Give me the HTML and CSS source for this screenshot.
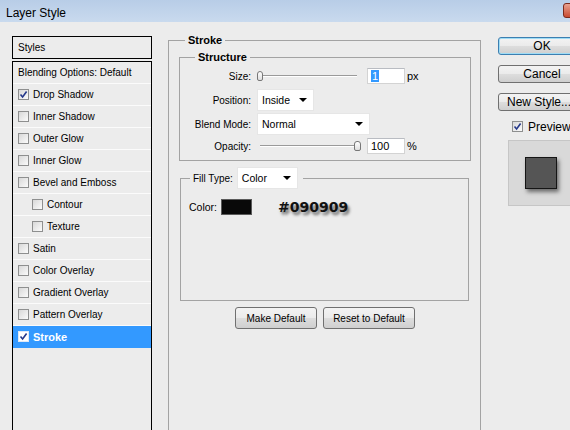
FILE: index.html
```html
<!DOCTYPE html>
<html>
<head>
<meta charset="utf-8">
<title>Layer Style</title>
<link rel="stylesheet" href="styles.css">
</head>
<body>
<div class="titlebar"><span class="title">Layer Style</span><span class="close"></span></div>
<div class="main">
  <div class="left">
    <div class="hdr">Styles</div>
    <ul class="list">
      <li class="row">Blending Options: Default</li>
      <li class="row"><span class="cb"><svg viewBox="0 0 9 9" width="9" height="9"><path d="M1.5 4.5 L3.6 7 L7.6 1.5" fill="none" stroke="#25388a" stroke-width="1.6"/></svg></span>Drop Shadow</li>
      <li class="row"><span class="cb"></span>Inner Shadow</li>
      <li class="row"><span class="cb"></span>Outer Glow</li>
      <li class="row"><span class="cb"></span>Inner Glow</li>
      <li class="row"><span class="cb"></span>Bevel and Emboss</li>
      <li class="row sub"><span class="cb"></span>Contour</li>
      <li class="row sub"><span class="cb"></span>Texture</li>
      <li class="row"><span class="cb"></span>Satin</li>
      <li class="row"><span class="cb"></span>Color Overlay</li>
      <li class="row"><span class="cb"></span>Gradient Overlay</li>
      <li class="row"><span class="cb"></span>Pattern Overlay</li>
      <li class="row active"><span class="cb"><svg viewBox="0 0 9 9" width="9" height="9"><path d="M1.5 4.5 L3.6 7 L7.6 1.5" fill="none" stroke="#25388a" stroke-width="1.6"/></svg></span>Stroke</li>
    </ul>
  </div>

  <fieldset class="stroke">
    <legend>Stroke</legend>
    <div class="stroke-body">
      <fieldset class="structure">
        <legend>Structure</legend>
        <div class="grid">
          <span class="lbl">Size:</span>
          <div class="ctrl">
            <span class="slider"><span class="thumb"></span></span>
            <span class="num"><span class="hl">1</span></span>
            <span class="unit">px</span>
          </div>
          <span class="lbl">Position:</span>
          <div class="ctrl"><span class="select pos">Inside<span class="arr"></span></span></div>
          <span class="lbl">Blend Mode:</span>
          <div class="ctrl"><span class="select blend">Normal<span class="arr"></span></span></div>
          <span class="lbl">Opacity:</span>
          <div class="ctrl">
            <span class="slider"><span class="thumb end"></span></span>
            <span class="num">100</span>
            <span class="unit">%</span>
          </div>
        </div>
      </fieldset>

      <fieldset class="fill">
        <legend><span class="legend-in">Fill Type:<span class="select ftype">Color<span class="arr"></span></span></span></legend>
        <div class="fill-body">
          <span class="clabel">Color:</span>
          <span class="swatch"></span>
          <span class="hex">#090909</span>
        </div>
      </fieldset>

      <div class="btns">
        <button class="btn mk">Make Default</button>
        <button class="btn rs">Reset to Default</button>
      </div>
    </div>
  </fieldset>

  <div class="right">
    <button class="btn rbtn ok">OK</button>
    <button class="btn rbtn">Cancel</button>
    <button class="btn rbtn ns">New Style...</button>
    <div class="prev-row"><span class="cb"><svg viewBox="0 0 9 9" width="9" height="9"><path d="M1.5 4.5 L3.6 7 L7.6 1.5" fill="none" stroke="#25388a" stroke-width="1.6"/></svg></span>Preview</div>
    <div class="preview"><span class="square"></span></div>
  </div>
</div>
</body>
</html>
```
FILE: styles.css
```css
html, body {
  margin: 0;
  padding: 0;
}
body {
  width: 570px;
  height: 430px;
  overflow: hidden;
  background: #ececec;
  font-family: "Liberation Sans", Arial, sans-serif;
  font-size: 10px;
  color: #000;
}

.titlebar {
  height: 22px;
  display: flex;
  justify-content: space-between;
  align-items: flex-start;
  padding-left: 6px;
  background: linear-gradient(#b8cde7, #c9daee);
}
.title {
  font-size: 12px;
  line-height: 26px;
}
.close {
  width: 24px;
  height: 15px;
  margin-top: 3px;
  margin-right: -17px;
  box-sizing: border-box;
  border: 1px solid #7c2a1c;
  border-radius: 3px;
  background: linear-gradient(#e9a18f, #c84a30);
}

.main {
  display: flex;
  align-items: flex-start;
  padding-left: 12px;
}

/* left list */
.left {
  flex: none;
  width: 140px;
  margin-top: 14px;
}
.hdr {
  box-sizing: border-box;
  height: 23px;
  border: 1px solid #000;
  line-height: 21px;
  padding-left: 5px;
}
.list {
  margin: 2px 0 0;
  padding: 0;
  list-style: none;
  border: 1px solid #000;
  height: 420px;
}
.row {
  height: 21px;
  border-bottom: 1px solid #fbfbfb;
  display: flex;
  align-items: center;
  padding-left: 5px;
}
.row.sub {
  padding-left: 19px;
}
.row.active {
  background: #3399ff;
  color: #fff;
  font-weight: bold;
  font-size: 11px;
  border-bottom-color: #3399ff;
}
.cb {
  flex: none;
  width: 11px;
  height: 11px;
  box-sizing: border-box;
  border: 1px solid #8e8f8f;
  background: linear-gradient(135deg, #d8d8d8, #fbfbfb);
  margin-right: 4px;
  display: flex;
  align-items: center;
  justify-content: center;
}
.row.active .cb {
  background: #fff;
  border-color: #dfe8f5;
}

/* middle */
.stroke {
  flex: none;
  box-sizing: border-box;
  width: 313px;
  height: 460px;
  margin: 11px 0 0 16px;
  padding: 0;
  border: 1px solid #a3a3a3;
  min-width: 0;
}
.stroke > legend,
.structure > legend {
  font-weight: bold;
  font-size: 11px;
  line-height: 14px;
  padding: 0 3px;
}
.stroke > legend {
  margin-left: 16px;
}
.structure > legend {
  margin-left: 15px;
}
.stroke-body {
  padding: 3px 9px 0 10px;
}
.structure {
  margin: 0;
  padding: 0;
  border: 1px solid #a3a3a3;
  min-width: 0;
}
.grid {
  display: grid;
  grid-template-columns: 71px auto;
  grid-template-rows: 22px 22px 22px 18px;
  column-gap: 6px;
  row-gap: 2px;
  align-items: center;
  padding: 1px 0 5px;
}
.lbl {
  text-align: right;
}
.ctrl {
  display: flex;
  align-items: center;
}
.slider {
  position: relative;
  width: 100px;
  height: 10px;
  margin-right: 10px;
}
.slider::before {
  content: "";
  position: absolute;
  left: 3px;
  right: 0;
  top: 4px;
  border-top: 1px solid #9a9a9a;
  border-bottom: 1px solid #fff;
}
.thumb {
  position: absolute;
  left: 0;
  top: 0;
  width: 6px;
  height: 10px;
  box-sizing: border-box;
  border: 1px solid #777;
  border-radius: 3px 3px 2px 2px;
  background: linear-gradient(#fff, #dedede);
}
.thumb.end {
  left: 97px;
  width: 7px;
}
.num {
  box-sizing: border-box;
  width: 38px;
  height: 16px;
  background: #fff;
  border: 1px solid #d3d3d3;
  border-top-color: #b9bcc2;
  padding-left: 3px;
  line-height: 14px;
  font-size: 11px;
}
.hl {
  background: #3399ff;
  color: #fff;
  padding: 0 1px;
}
.unit {
  margin-left: 2px;
  font-size: 11px;
}
.select {
  box-sizing: border-box;
  display: inline-flex;
  align-items: center;
  justify-content: space-between;
  height: 22px;
  background: #fff;
  border: 1px solid #e6e6e6;
  padding: 0 6px 0 4px;
  font-size: 10.5px;
}
.select.pos {
  width: 57px;
}
.select.blend {
  width: 113px;
}
.select.ftype {
  width: 61px;
  margin-left: 4px;
}
.arr {
  width: 0;
  height: 0;
  border-left: 4px solid transparent;
  border-right: 4px solid transparent;
  border-top: 4px solid #000;
}

.fill {
  margin: 6px 2px 0 1px;
  padding: 0;
  border: 1px solid #a3a3a3;
  min-width: 0;
}
.fill > legend {
  margin-left: 9px;
  padding: 0 5px 0 3px;
}
.legend-in {
  display: flex;
  align-items: center;
}
.fill-body {
  box-sizing: border-box;
  height: 111px;
  padding: 10px 0 0 8px;
  display: flex;
  align-items: center;
  align-content: flex-start;
  flex-wrap: wrap;
}
.clabel {
  line-height: 16px;
  font-size: 10.5px;
}
.swatch {
  width: 31px;
  height: 16px;
  margin-left: 4px;
  box-sizing: border-box;
  background: #090909;
  border: 1px solid #5a5a5a;
}
.hex {
  margin-left: 26px;
  font-family: "DejaVu Sans", Verdana, sans-serif;
  font-weight: bold;
  font-size: 14px;
  line-height: 16px;
  color: #111;
  text-shadow: 2px 3px 3px rgba(0, 0, 0, 0.55);
}

.btns {
  display: flex;
  justify-content: center;
  gap: 6px;
  margin-top: 6px;
}
.btn {
  font-family: inherit;
  font-size: 10px;
  color: #000;
  height: 22px;
  padding: 0;
  border: 1px solid #707070;
  border-radius: 3px;
  background: linear-gradient(#f3f3f3 0%, #ebebeb 48%, #dddddd 52%, #cfcfcf 100%);
}
.btn.mk {
  width: 82px;
}
.btn.rs {
  width: 92px;
}

/* right */
.right {
  flex: none;
  width: 88px;
  margin: 15px 0 0 17px;
  display: flex;
  flex-direction: column;
}
.rbtn {
  height: 18px;
  margin-bottom: 10px;
  font-size: 12px;
  line-height: 14px;
}
.rbtn.ns {
  text-align: left;
  padding-left: 8px;
}
.rbtn.ok {
  border-color: #3c7fb1;
  box-shadow: inset 0 0 0 1px #9fdcf5;
}
.prev-row {
  display: flex;
  align-items: center;
  height: 13px;
  margin-top: -1px;
  padding-left: 14px;
  font-size: 12px;
}
.prev-row .cb {
  margin-right: 5px;
}
.preview {
  box-sizing: border-box;
  width: 66px;
  height: 66px;
  margin: 7px 0 0 10px;
  background: #d9d9d9;
  border: 1px solid #c6c6c6;
  display: flex;
  align-items: center;
  justify-content: center;
}
.square {
  width: 32px;
  height: 32px;
  box-sizing: border-box;
  background: #555;
  border: 1px solid #151515;
  box-shadow: 2px 3px 4px rgba(0, 0, 0, 0.5);
}
```
